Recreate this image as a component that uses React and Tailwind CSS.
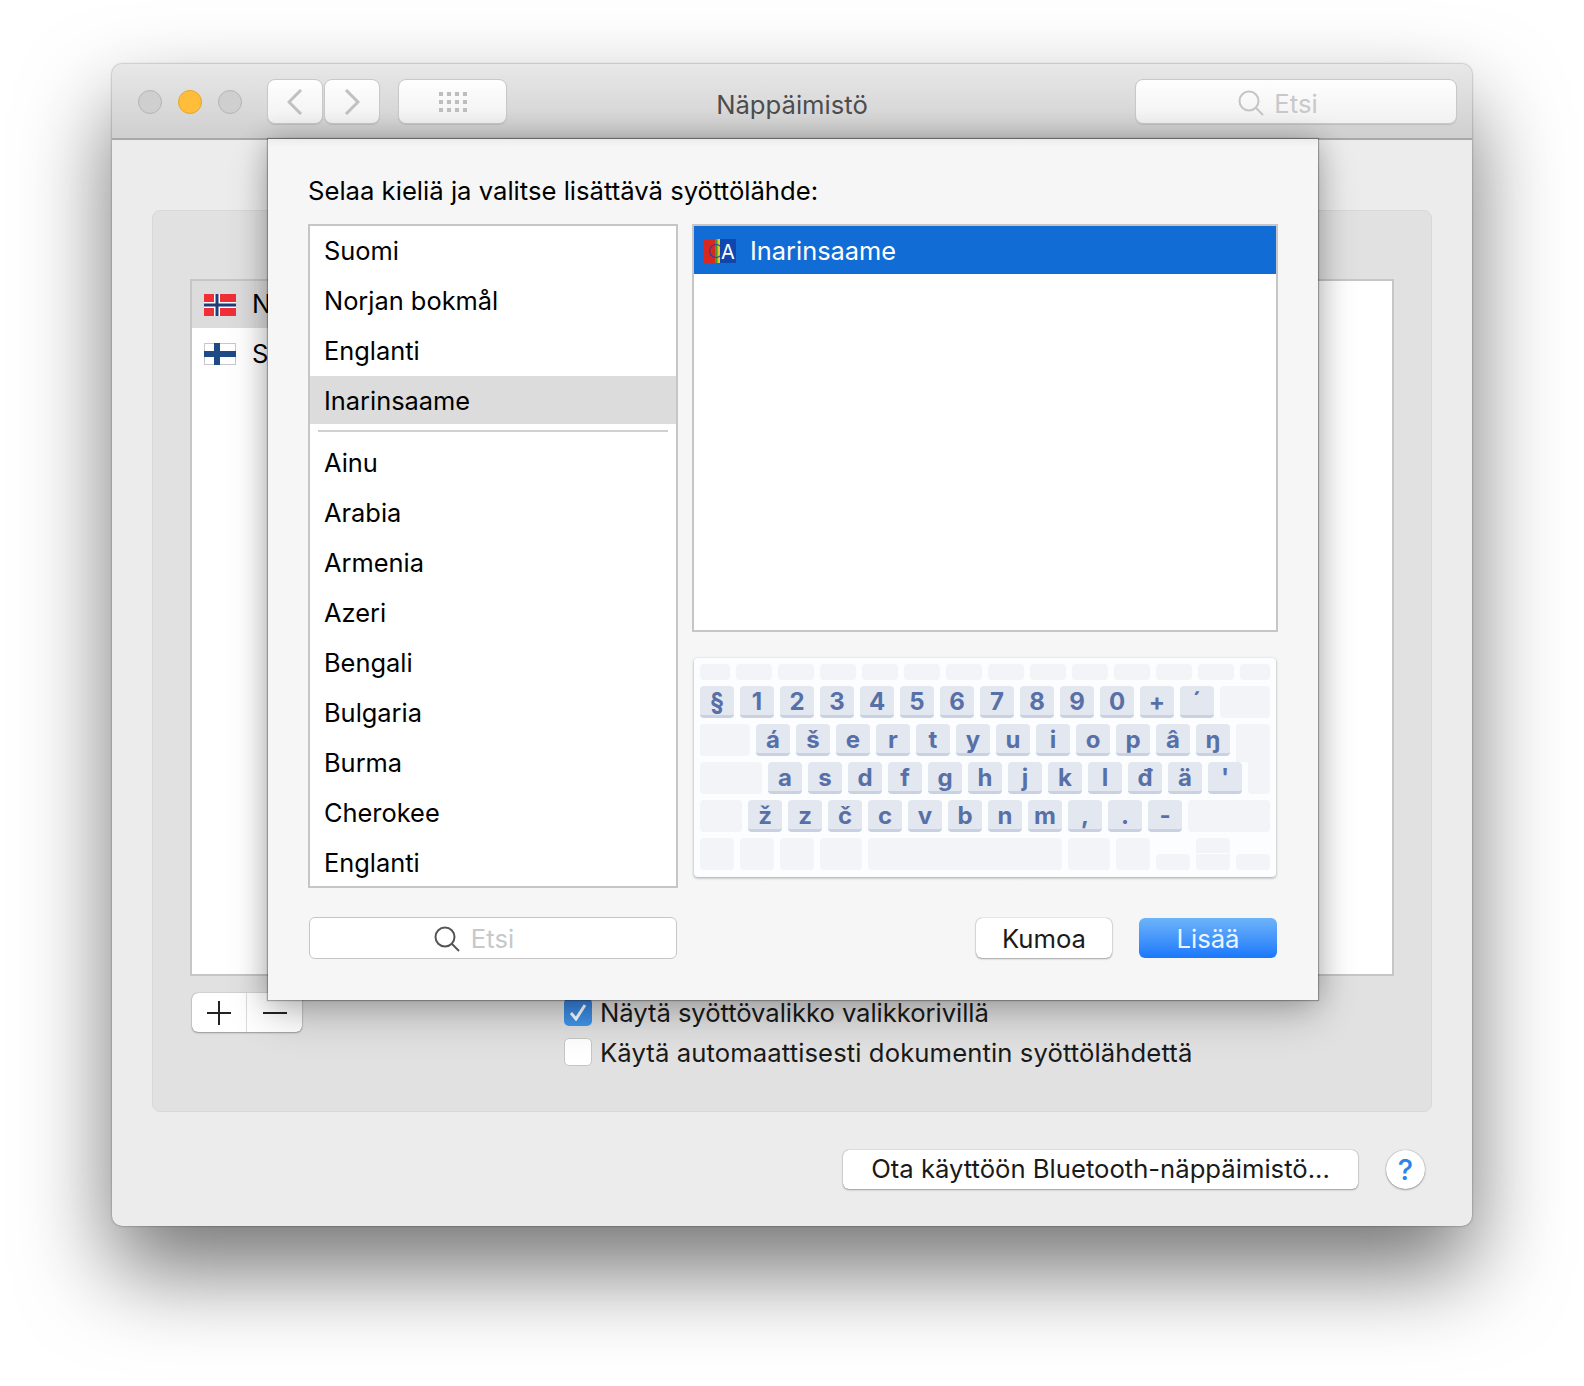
const primary = ['Suomi', 'Norjan bokmål', 'Englanti'];
const others = ['Ainu', 'Arabia', 'Armenia', 'Azeri', 'Bengali', 'Bulgaria', 'Burma', 'Cherokee', 'Englanti'];

const functionKeys = ['w-[30px]', ...Array(12).fill('w-[36px]'), 'w-[30px]'];
const numberRow = ['§', '1', '2', '3', '4', '5', '6', '7', '8', '9', '0', '+', '´'];
const topRow = ['á', 'š', 'e', 'r', 't', 'y', 'u', 'i', 'o', 'p', 'â', 'ŋ'];
const homeRow = ['a', 's', 'd', 'f', 'g', 'h', 'j', 'k', 'l', 'đ', 'ä', "'"];
const bottomRow = ['ž', 'z', 'č', 'c', 'v', 'b', 'n', 'm', ',', '.', '-'];

function Key({ label }) {
  return (
    <div className="flex h-[32px] w-[34px] items-center justify-center rounded-[4px] border-b-[3px] border-[#c9d1e2] bg-[#e3e7ef] pt-[2px] text-[24px] leading-none font-bold text-[#5870a8]">
      {label}
    </div>
  );
}

function Blank({ className }) {
  return <div className={`rounded-[4px] bg-[#f2f4f8] ${className}`} />;
}

function Keyboard() {
  return (
    <div className="mt-[26px] flex h-[219px] w-[582px] flex-col gap-[6px] rounded-[4px] bg-[#fcfdfe] pt-[6px] pl-[6px] shadow-[0_1px_3px_rgba(0,0,0,0.35)]">
      <div className="flex gap-[6px]">
        {functionKeys.map((w, i) => (
          <Blank key={i} className={`h-[16px] ${w}`} />
        ))}
      </div>
      <div className="flex gap-[6px]">
        {numberRow.map((k) => (
          <Key key={k} label={k} />
        ))}
        <Blank className="h-[32px] w-[50px]" />
      </div>
      <div className="flex h-[32px] items-start gap-[6px]">
        <Blank className="h-[32px] w-[50px]" />
        {topRow.map((k) => (
          <Key key={k} label={k} />
        ))}
        <Blank className="h-[38px] w-[34px] rounded-b-none" />
      </div>
      <div className="flex gap-[6px]">
        <Blank className="h-[32px] w-[62px]" />
        {homeRow.map((k) => (
          <Key key={k} label={k} />
        ))}
        <Blank className="h-[32px] w-[22px] rounded-t-none" />
      </div>
      <div className="flex gap-[6px]">
        <Blank className="h-[32px] w-[42px]" />
        {bottomRow.map((k) => (
          <Key key={k} label={k} />
        ))}
        <Blank className="h-[32px] w-[82px]" />
      </div>
      <div className="flex items-end gap-[6px]">
        <Blank className="h-[32px] w-[34px]" />
        <Blank className="h-[32px] w-[34px]" />
        <Blank className="h-[32px] w-[34px]" />
        <Blank className="h-[32px] w-[42px]" />
        <Blank className="h-[32px] w-[194px]" />
        <Blank className="h-[32px] w-[42px]" />
        <Blank className="h-[32px] w-[34px]" />
        <Blank className="h-[16px] w-[34px]" />
        <div className="flex flex-col gap-[1px]">
          <Blank className="h-[15px] w-[34px] rounded-b-none" />
          <Blank className="h-[16px] w-[34px] rounded-t-none" />
        </div>
        <Blank className="h-[16px] w-[34px]" />
      </div>
    </div>
  );
}

function SearchIcon({ className }) {
  return (
    <svg viewBox="0 0 26 26" fill="none" strokeWidth="2" className={className}>
      <circle cx="11" cy="11" r="9.5" />
      <path d="M18 18l7 7" />
    </svg>
  );
}

function NorwayFlag() {
  return (
    <svg viewBox="0 0 32 22" className="h-[22px] w-[32px] shrink-0">
      <rect width="32" height="22" fill="#ee2f38" />
      <rect x="10" width="6" height="22" fill="#fff" />
      <rect y="8" width="32" height="6" fill="#fff" />
      <rect x="11.5" width="3" height="22" fill="#1f3d78" />
      <rect y="9.5" width="32" height="3" fill="#1f3d78" />
    </svg>
  );
}

function FinlandFlag() {
  return (
    <svg viewBox="0 0 32 22" className="h-[22px] w-[32px] shrink-0">
      <rect x="0.5" y="0.5" width="31" height="21" fill="#fff" stroke="#c8c8c8" />
      <rect x="10" width="6" height="22" fill="#1f4a85" />
      <rect y="8" width="32" height="6" fill="#1f4a85" />
    </svg>
  );
}

function SamiIcon() {
  return (
    <svg viewBox="0 0 32 24" className="h-[24px] w-[32px] shrink-0">
      <rect width="14" height="24" fill="#d9281f" />
      <rect x="11" width="2.5" height="24" fill="#3f9a3a" />
      <rect x="13.5" width="2.5" height="24" fill="#e8c81e" />
      <rect x="16" width="16" height="24" fill="#0f47ae" />
      <circle cx="12" cy="12" r="6.5" fill="none" stroke="#2a3fa8" strokeWidth="1.2" />
      <text x="24" y="20" textAnchor="middle" fill="#fff" fontSize="20" fontFamily="Inter, sans-serif">A</text>
    </svg>
  );
}

function ToolButton({ className, children }) {
  return (
    <div className={`mb-[2px] flex h-[45px] items-center justify-center rounded-[8px] border border-[#c9c8c9] bg-gradient-to-b from-[#fefefe] to-[#f1f1f1] pt-[2px] shadow-[0_1px_1px_rgba(0,0,0,0.1)] ${className}`}>
      {children}
    </div>
  );
}

function Sheet() {
  return (
    <div className="absolute top-[75px] left-[156px] flex h-[861px] w-[1050px] flex-col bg-[#f6f6f6] bg-gradient-to-b from-[#ececec] from-0% to-[#f6f6f6] to-[8px] px-[40px] pt-[36px] shadow-[0_0_1px_1px_rgba(0,0,0,0.28),0_0_26px_rgba(0,0,0,0.22),0_16px_40px_rgba(0,0,0,0.2)]">
      <div className="h-[32px] leading-[32px] text-black">Selaa kieliä ja valitse lisättävä syöttölähde:</div>
      <div className="mt-[17px] flex gap-[14px]">
        <div className="h-[664px] w-[370px] overflow-hidden border-2 border-[#c6c6c6] bg-white text-[25.4px]">
          {primary.map((name) => (
            <div key={name} className="flex h-[50px] items-center pl-[14px] text-black">{name}</div>
          ))}
          <div className="flex h-[48px] items-center bg-[#dcdcdc] pt-[2px] pl-[14px] text-black">Inarinsaame</div>
          <div className="mx-[8px] mt-[6px] h-[2px] bg-[#d0d0d0]" />
          <div className="mt-[5px]">
            {others.map((name) => (
              <div key={name} className="flex h-[50px] items-center pt-[2px] pl-[14px] text-black">{name}</div>
            ))}
          </div>
        </div>
        <div className="flex flex-col">
          <div className="h-[408px] w-[586px] border-2 border-[#c6c6c6] bg-white text-[25.4px]">
            <div className="flex h-[48px] items-center gap-[14px] bg-[#116cd6] pt-[2px] pl-[10px] text-white">
              <SamiIcon />
              Inarinsaame
            </div>
          </div>
          <div className="ml-[2px]">
            <Keyboard />
          </div>
        </div>
      </div>
      <div className="mt-[29px] flex items-center">
        <div className="ml-[1px] flex h-[42px] w-[368px] items-center justify-center gap-[11px] rounded-[6px] border-[1.5px] border-[#c6c6c6] bg-white pt-[2px] pr-[38px]">
          <SearchIcon className="h-[26px] w-[26px] stroke-[#555]" />
          <span className="text-[#c8c8c8]">Etsi</span>
        </div>
        <div className="ml-[299px] flex h-[40px] w-[136px] items-center justify-center rounded-[6px] bg-white pt-[2px] text-[#1a1a1a] shadow-[0_0_1px_rgba(0,0,0,0.5),0_1px_2px_rgba(0,0,0,0.3)]">Kumoa</div>
        <div className="ml-[27px] flex h-[40px] w-[138px] items-center justify-center rounded-[6px] bg-gradient-to-b from-[#6db3fa] to-[#1878fb] pt-[2px] text-[#ecf5ff]">Lisää</div>
      </div>
    </div>
  );
}

export default function App() {
  return (
    <div className="h-[1386px] w-[1584px] overflow-hidden bg-white pt-[64px] pl-[112px] font-['Inter',sans-serif] text-[25.65px]">
      <div className="relative h-[1162px] w-[1360px] rounded-[10px] bg-[#ececec] shadow-[0_44px_90px_rgba(0,0,0,0.55),0_0_2px_rgba(0,0,0,0.5)]">
        <div className="grid h-[76px] grid-cols-[1fr_auto_1fr] items-center rounded-t-[10px] border-b-2 border-[#a9a8a9] bg-gradient-to-b from-[#e9e8e9] to-[#d0cfd0] px-[15px] pt-[2px]">
          <div className="flex items-center pl-[11px]">
            <div className="h-[24px] w-[24px] rounded-full border border-[#b5b5b5] bg-[#cfcfcf]" />
            <div className="ml-[16px] h-[24px] w-[24px] rounded-full border border-[#e5a52d] bg-[#ffbd3a]" />
            <div className="ml-[16px] h-[24px] w-[24px] rounded-full border border-[#b5b5b5] bg-[#cfcfcf]" />
            <ToolButton className="ml-[25px] w-[56px]">
              <svg viewBox="0 0 16 26" fill="none" stroke="#c0c0c0" strokeWidth="3" className="h-[26px] w-[16px]">
                <path d="M14 1L2 13l12 12" />
              </svg>
            </ToolButton>
            <ToolButton className="ml-[1px] w-[56px]">
              <svg viewBox="0 0 16 26" fill="none" stroke="#c0c0c0" strokeWidth="3" className="h-[26px] w-[16px]">
                <path d="M2 1l12 12L2 25" />
              </svg>
            </ToolButton>
            <ToolButton className="ml-[18px] w-[109px]">
              <svg viewBox="0 0 28 20" fill="#bdbdbd" className="h-[20px] w-[28px]">
                {[0, 8, 16].map((y) =>
                  [0, 8, 16, 24].map((x) => <rect key={`${x}-${y}`} x={x} y={y} width="4" height="4" />)
                )}
              </svg>
            </ToolButton>
          </div>
          <div className="pt-[6px] text-[#4d4d4d]">Näppäimistö</div>
          <div className="flex justify-end">
            <ToolButton className="w-[322px] pr-[36px]">
              <div className="mt-[2px] flex items-center gap-[10px]">
                <SearchIcon className="h-[26px] w-[26px] stroke-[#c4c4c4]" />
                <span className="pt-[2px] text-[#c8c8c8]">Etsi</span>
              </div>
            </ToolButton>
          </div>
        </div>

        <div className="mx-[40px] mt-[70px] h-[902px] rounded-[8px] border border-[#d8d8d8] bg-[#e1e1e1] px-[37px] pt-[68px]">
          <div className="h-[697px] w-[1204px] border-2 border-[#c6c6c6] bg-white">
            <div className="flex h-[47px] w-[340px] items-center gap-[16px] bg-[#dcdcdc] pl-[12px] text-black">
              <NorwayFlag />
              Norja
            </div>
            <div className="flex h-[52px] items-center gap-[16px] pl-[12px] text-black">
              <FinlandFlag />
              Suomi
            </div>
          </div>
          <div className="mt-[17px] flex items-start">
            <div className="ml-[2px] flex h-[39px] w-[110px] rounded-[6px] bg-white shadow-[0_0_1px_rgba(0,0,0,0.5),0_1px_2px_rgba(0,0,0,0.3)]">
              <div className="flex w-[55px] items-center justify-center border-r border-[#dcdcdc]">
                <svg viewBox="0 0 24 24" stroke="#222" strokeWidth="2" className="h-[24px] w-[24px]">
                  <path d="M0 12h24M12 0v24" />
                </svg>
              </div>
              <div className="flex flex-1 items-center justify-center">
                <svg viewBox="0 0 24 2" stroke="#222" strokeWidth="2" className="h-[2px] w-[24px]">
                  <path d="M0 1h24" />
                </svg>
              </div>
            </div>
            <div className="mt-[5px] ml-[262px] flex flex-col gap-[12px] text-[#1a1a1a]">
              <div className="flex h-[28px] items-center gap-[8px]">
                <div className="flex h-[28px] w-[28px] items-center justify-center rounded-[5px] bg-gradient-to-b from-[#3a7fd8] to-[#3f97ee]">
                  <svg viewBox="0 0 18 18" fill="none" stroke="#fff" strokeWidth="3" className="h-[18px] w-[18px]">
                    <path d="M2 10l5 6 9-14" />
                  </svg>
                </div>
                <span className="pt-[2px] tracking-[-0.06px]">Näytä syöttövalikko valikkorivillä</span>
              </div>
              <div className="flex h-[28px] items-center gap-[8px]">
                <div className="h-[28px] w-[28px] rounded-[5px] border border-[#c6c6c6] bg-white" />
                <span className="pt-[2px] tracking-[0.1px]">Käytä automaattisesti dokumentin syöttölähdettä</span>
              </div>
            </div>
          </div>
        </div>

        <div className="mt-[38px] flex items-center justify-end gap-[28px] pr-[47px]">
          <div className="flex h-[39px] w-[515px] items-center justify-center rounded-[6px] bg-white text-[#1a1a1a] shadow-[0_0_1px_rgba(0,0,0,0.5),0_1px_2px_rgba(0,0,0,0.3)]">
            Ota käyttöön Bluetooth-näppäimistö...
          </div>
          <div className="flex h-[39px] w-[39px] items-center justify-center rounded-full bg-white text-[29px] font-medium text-[#2b83ee] shadow-[0_0_1px_rgba(0,0,0,0.5),0_1px_2px_rgba(0,0,0,0.3)]">?</div>
        </div>

        <Sheet />
      </div>
    </div>
  );
}
